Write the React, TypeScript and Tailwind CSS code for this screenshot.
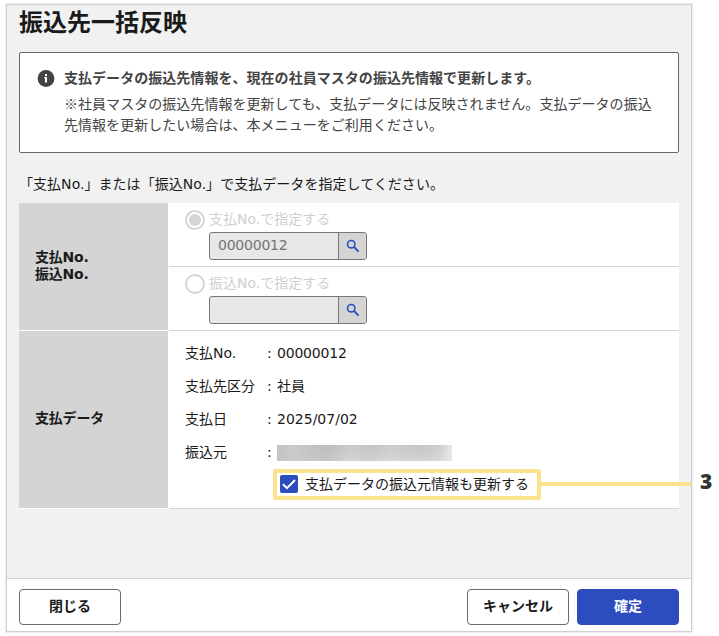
import type { ReactNode } from 'react';

function InfoIcon() {
    return (
        <svg className="mt-[4px] h-[17px] w-[18px] shrink-0" viewBox="0 0 18 17">
            <circle cx="9" cy="8.5" r="8.4" fill="#444" />
            <path d="M8 4h2v2H8zM7.2 7H10v5.6H8V8.2h-.8z" fill="#fff" />
        </svg>
    );
}

function SearchIcon() {
    return (
        <svg className="size-[14px]" viewBox="0 0 14 14" fill="none" stroke="#2d4dbe">
            <circle cx="5.2" cy="5.2" r="3.7" strokeWidth="1.6" />
            <path d="M8 8l4.6 4.6" strokeWidth="1.8" />
        </svg>
    );
}

interface IOptionProps {
    label: string;
    value: string;
    checked?: boolean;
}

function NumberOption({ label, value, checked }: IOptionProps) {
    return (
        <div className="h-16 border-b border-[#d4d4d4] pl-4 pt-[5px]">
            <label className="flex h-[22px] items-center text-[#d0d0d0]">
                <span className="mr-1 mt-[2px] flex size-5 items-center justify-center rounded-full border-2 border-[#d4d4d4]">
                    {checked && <span className="size-3 rounded-full bg-[#d4d4d4]" />}
                </span>
                {label}
            </label>
            <div className="ml-6 mt-[2px] flex h-7 w-[158px] overflow-hidden rounded-[3px] border border-[#777] bg-[#e7e7e7]">
                <div className="flex-1 pl-2 leading-[25px] tracking-[-0.23px] text-[#757575]">{value}</div>
                <button className="flex w-[28px] items-center justify-center border-l border-[#777] bg-[#d4d4d4]">
                    <SearchIcon />
                </button>
            </div>
        </div>
    );
}

function DataRow({ label, children }: { label: string; children: ReactNode }) {
    return (
        <div className="flex h-[33px] items-center">
            <span className="w-[82px]">{label}</span>
            <span className="w-[10px]">:</span>
            {children}
        </div>
    );
}

function HeaderCell({ children }: { children: ReactNode }) {
    return (
        <div className="mr-px flex w-[149px] shrink-0 items-center bg-[#d4d4d4] pb-[2px] pl-4 font-bold leading-[17px] tracking-[-0.2px]">
            {children}
        </div>
    );
}

function FooterButton({ label, primary }: { label: string; primary?: boolean }) {
    return (
        <button
            className={`h-9 w-[102px] rounded-[4px] border pb-[2px] font-bold ${
                primary ? 'border-[#2d4dbe] bg-[#2d4dbe] text-white' : 'border-[#6b6b6b] bg-white'
            }`}
        >
            {label}
        </button>
    );
}

export default function App() {
    return (
        <main className="relative h-[636px] w-[719px] overflow-hidden bg-white pl-[6px] pt-[4px] font-['DejaVu_Sans','Noto_Sans_CJK_JP',sans-serif] text-[14px] leading-[21px] text-[#1a1a1a]">
            <section className="flex h-[628px] w-[686px] flex-col border border-[#d0d0d0] bg-[#f1f1f1] shadow-[0_0_1px_1px_#eeeeee]">
                <div className="flex-1 px-3">
                    <h1 className="h-[47px] text-[24px] font-bold leading-[36px]">振込先一括反映</h1>

                    <div className="flex h-[101px] rounded-[2px] border border-[#666] bg-white pl-[17px] pt-[13px] text-[#444]">
                        <InfoIcon />
                        <div className="ml-[9px] mt-[2px] w-[592px] tracking-[0.04px]">
                            <p className="mb-1 font-bold">
                                支払データの振込先情報を、現在の社員マスタの振込先情報で更新します。
                            </p>
                            <p className="font-['Noto_Sans_CJK_JP',sans-serif]">
                                ※社員マスタの振込先情報を更新しても、支払データには反映されません。支払データの振込
                                <br />
                                先情報を更新したい場合は、本メニューをご利用ください。
                            </p>
                        </div>
                    </div>

                    <p className="mb-[8px] mt-[21px] tracking-[0.04px]">「支払No.」または「振込No.」で支払データを指定してください。</p>

                    <div className="bg-white">
                        <div className="flex h-32">
                            <div className="flex border-b border-white">
                                <HeaderCell>
                                    支払No.
                                    <br />
                                    振込No.
                                </HeaderCell>
                            </div>
                            <div className="flex-1">
                                <NumberOption label="支払No.で指定する" value="00000012" checked />
                                <NumberOption label="振込No.で指定する" value="" />
                            </div>
                        </div>
                        <div className="flex h-[178px]">
                            <div className="flex border-b border-white">
                                <HeaderCell>支払データ</HeaderCell>
                            </div>
                            <div className="flex-1 border-b border-[#d4d4d4] pl-4 pt-[6px]">
                                <DataRow label="支払No.">
                                    <span className="tracking-[-0.2px]">00000012</span>
                                </DataRow>
                                <DataRow label="支払先区分">社員</DataRow>
                                <DataRow label="支払日">2025/07/02</DataRow>
                                <DataRow label="振込元">
                                    <span className="h-4 w-[175px] bg-[linear-gradient(90deg,#c4c4c4,#cacaca_10%,#bebebe_28%,#cacaca_42%,#c2c2c2_55%,#c8c8c8_65%,#bcbcbc_80%,#c0c0c0_92%,#dedede)]">
                                        <span className="block h-full w-full bg-[linear-gradient(170deg,transparent_30%,rgba(255,255,255,0.4))]" />
                                    </span>
                                </DataRow>
                                <label className="ml-[88px] flex h-[31px] w-[268px] items-center rounded-[2px] border-4 border-[#fbe38e] pl-[3px]">
                                    <span className="mb-px mr-[7px] flex size-[18px] items-center justify-center rounded-[2px] bg-[#2d4dbe]">
                                        <svg className="size-[18px]" viewBox="0 0 18 18" fill="none">
                                            <path d="M3 9.2l4 4L15 5" stroke="#fff" strokeWidth="2" />
                                        </svg>
                                    </span>
                                    支払データの振込元情報も更新する
                                </label>
                            </div>
                        </div>
                    </div>
                </div>

                <footer className="flex h-[53px] gap-2 border-t border-[#d0d0d0] bg-white px-3 pt-[10px]">
                    <FooterButton label="閉じる" />
                    <span className="flex-1" />
                    <FooterButton label="キャンセル" />
                    <FooterButton label="確定" primary />
                </footer>
            </section>

            {/* callout line and step number over the dialog */}
            <div className="absolute left-[541px] top-[467px] flex h-[30px] items-center">
                <span className="mt-[3px] h-[4px] w-[150px] bg-[#fbe38e]" />
                <span className="mb-[2px] ml-[9px] font-['Open_Sans',sans-serif] text-[21px] font-extrabold leading-[28px] text-[#333]">3</span>
            </div>
        </main>
    );
}
